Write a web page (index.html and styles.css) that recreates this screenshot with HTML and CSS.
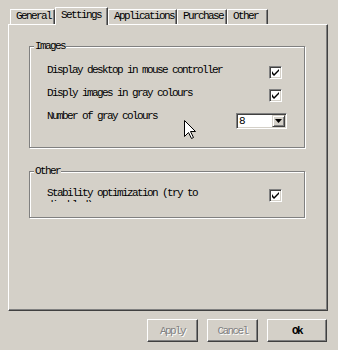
FILE: index.html
```html
<!DOCTYPE html>
<html lang="en">
<head>
    <meta charset="UTF-8">
    <meta name="viewport" content="width=device-width, initial-scale=1.0">
    <title>Settings</title>
    <link rel="stylesheet" href="styles.css">
</head>
<body>
    <div class="window">
        <div class="tabs">
            <div class="tab tab-general">General</div>
            <div class="tab tab-settings active">Settings</div>
            <div class="tab tab-apps">Applications</div>
            <div class="tab tab-purchase">Purchase</div>
            <div class="tab tab-other">Other</div>
        </div>

        <div class="panel">
            <div class="group">
                <div class="group-title">Images</div>
                <div class="row first">
                    <span class="label">Display desktop in mouse controller</span>
                    <span class="checkbox checked">
                        <svg width="7" height="7" viewBox="0 0 7 7"><path d="M0 2v3l2 2l5-5v-2l-5 5z" fill="#000"/></svg>
                    </span>
                </div>
                <div class="row">
                    <span class="label">Disply images in gray colours</span>
                    <span class="checkbox checked">
                        <svg width="7" height="7" viewBox="0 0 7 7"><path d="M0 2v3l2 2l5-5v-2l-5 5z" fill="#000"/></svg>
                    </span>
                </div>
                <div class="row">
                    <span class="label">Number of gray colours</span>
                    <div class="select">
                        <span class="select-value">8</span>
                        <span class="select-btn">
                            <svg width="7" height="4" viewBox="0 0 7 4"><path d="M0 0h7l-3.5 4z" fill="#000"/></svg>
                        </span>
                    </div>
                </div>
            </div>

            <div class="group group-other">
                <div class="group-title">Other</div>
                <div class="row first short">
                    <span class="label label-wrap">Stability optimization (try to disabled)</span>
                    <span class="checkbox checked">
                        <svg width="7" height="7" viewBox="0 0 7 7"><path d="M0 2v3l2 2l5-5v-2l-5 5z" fill="#000"/></svg>
                    </span>
                </div>
            </div>
        </div>

        <div class="buttons">
            <button class="btn btn-small" disabled>Apply</button>
            <button class="btn btn-small" disabled>Cancel</button>
            <button class="btn btn-ok">Ok</button>
        </div>

        <!-- mouse pointer -->
        <svg class="cursor" width="13" height="20" viewBox="0 0 13 20">
            <path d="M0.5 0.5V16.5L4.5 12.5L7.5 18.5L9.5 17.5L6.5 11.5H11.5Z" fill="#fff" stroke="#000" stroke-width="1"/>
        </svg>
    </div>
</body>
</html>
```

FILE: styles.css
```css
body {
    margin: 0;
    background-color: #d4d0c8;
    font-family: "Liberation Mono", "DejaVu Sans Mono", monospace;
    font-size: 11px;
    letter-spacing: -1.6px;
    color: #000;
}
.window {
    position: relative;
    width: 338px;
    height: 350px;
    box-sizing: border-box;
    padding: 7px 10px 0 8px;
}

/* tabs */
.tabs {
    display: flex;
    align-items: flex-end;
    height: 17px;
    padding-left: 2px;
}
.tab {
    box-sizing: border-box;
    height: 15px;
    line-height: 13px;
    padding-left: 5px;
    border-top: 1px solid #fff;
    border-left: 1px solid #fff;
    border-right: 1px solid #404040;
    box-shadow: inset -1px 0 #808080;
    white-space: nowrap;
}
.tab.active {
    position: relative;
    z-index: 1;
    height: 18px;
    margin-bottom: -1px;
    line-height: 14px;
    background-color: #d4d0c8;
}
.tab-general { width: 45px; }
.tab-settings { width: 53px; }
.tab-apps { width: 69px; }
.tab-purchase { width: 50px; }
.tab-other { width: 41px; }

/* panel */
.panel {
    box-sizing: border-box;
    height: 287px;
    padding: 21px 0 0 20px;
    border: 1px solid;
    border-color: #fff #404040 #404040 #fff;
    box-shadow: inset -1px -1px #808080;
}
.group {
    box-sizing: border-box;
    width: 276px;
    padding: 0 0 17px 17px;
    border: 1px solid #808080;
    box-shadow: 1px 1px 0 #fff, inset 1px 1px 0 #fff;
}
.group-other {
    margin-top: 23px;
    padding-bottom: 14px;
}
.group-title {
    display: table;
    height: 12px;
    line-height: 12px;
    margin: -7px 0 0 -13px;
    padding: 0 1px;
    background-color: #d4d0c8;
}
.row {
    display: flex;
    align-items: center;
    justify-content: space-between;
    height: 23px;
    padding-right: 22px;
}
.row.first {
    margin-top: 9px;
}
.row.short {
    height: 16px;
    margin-top: 10px;
}
.label {
    margin-top: -5px;
    white-space: nowrap;
}
.label-wrap {
    width: 160px;
    height: 15px;
    margin-top: -1px;
    line-height: 12px;
    white-space: normal;
    overflow: hidden;
}

/* controls */
.checkbox {
    box-sizing: border-box;
    display: flex;
    align-items: center;
    justify-content: center;
    width: 13px;
    height: 13px;
    background-color: #fff;
    border: 1px solid;
    border-color: #808080 #fff #fff #808080;
    box-shadow: inset 1px 1px #404040, inset -1px -1px #d4d0c8;
}
.select {
    box-sizing: border-box;
    display: flex;
    width: 51px;
    height: 16px;
    margin: 5px -5px 0 0;
    padding: 1px 1px 1px 2px;
    background-color: #fff;
    border: 1px solid;
    border-color: #808080 #fff #fff #808080;
    box-shadow: inset 1px 1px #404040, inset -1px -1px #d4d0c8;
}
.select-value {
    flex: 1;
    line-height: 12px;
}
.select-btn {
    box-sizing: border-box;
    display: flex;
    align-items: center;
    justify-content: center;
    width: 13px;
    background-color: #d4d0c8;
    border: 1px solid;
    border-color: #d4d0c8 #404040 #404040 #d4d0c8;
    box-shadow: inset 1px 1px #fff, inset -1px -1px #808080;
}

/* buttons */
.buttons {
    display: flex;
    justify-content: flex-end;
    gap: 9px;
    margin-top: 8px;
    padding-right: 1px;
}
.btn {
    box-sizing: border-box;
    height: 23px;
    padding: 0;
    font-family: inherit;
    font-size: 11px;
    letter-spacing: -1.6px;
    color: #000;
    background-color: #d4d0c8;
    border: 1px solid;
    border-color: #fff #404040 #404040 #fff;
    box-shadow: inset -1px -1px #808080;
}
.btn-small {
    width: 51px;
}
.btn:disabled {
    color: #808080;
    text-shadow: 1px 1px 0 #fff;
}
.btn-ok {
    width: 60px;
    font-weight: bold;
}

.cursor {
    position: absolute;
    left: 184px;
    top: 120px;
}
```
